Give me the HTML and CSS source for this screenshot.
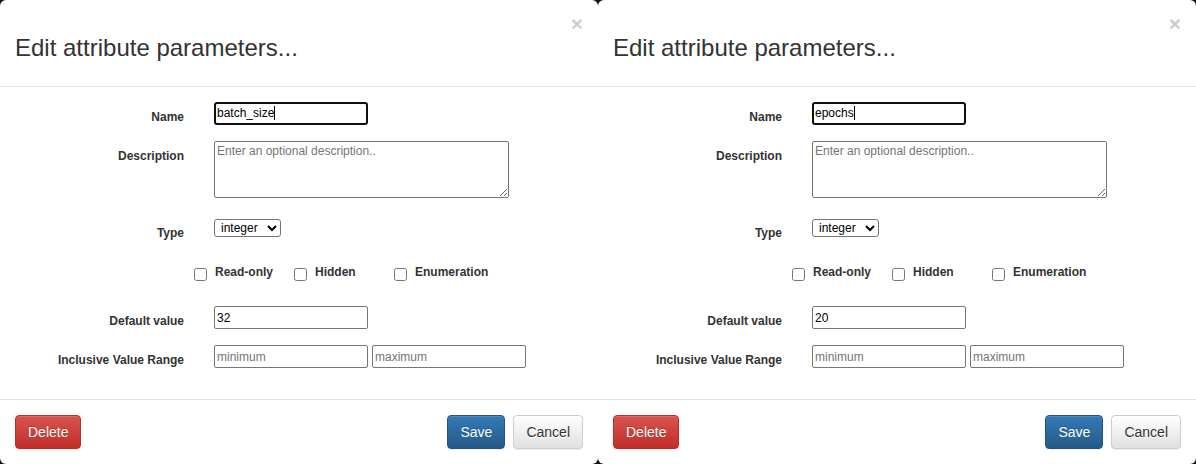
FILE: index.html
```html
<!DOCTYPE html>
<html>
<head>
<meta charset="utf-8">
<link rel="stylesheet" href="styles.css">
</head>
<body>
<div class="stage">
  <div class="modal">
    <div class="modal-header">
      <div class="close-row"><span class="close">×</span></div>
      <h4 class="modal-title">Edit attribute parameters...</h4>
    </div>
    <div class="modal-body">
      <div class="row r-name">
        <label class="lbl">Name</label>
        <div class="input focused">batch_size<span class="caret"></span></div>
      </div>
      <div class="row r-desc">
        <label class="lbl">Description</label>
        <textarea class="textarea" placeholder="Enter an optional description.."></textarea>
      </div>
      <div class="row r-type">
        <label class="lbl">Type</label>
        <select class="select"><option>integer</option></select>
      </div>
      <div class="checks">
        <label class="check"><input type="checkbox"><span>Read-only</span></label>
        <label class="check"><input type="checkbox"><span>Hidden</span></label>
        <label class="check"><input type="checkbox"><span>Enumeration</span></label>
      </div>
      <div class="row r-default">
        <label class="lbl">Default value</label>
        <input class="input" type="text" value="32">
      </div>
      <div class="row r-range">
        <label class="lbl">Inclusive Value Range</label>
        <div class="pair">
          <input class="input" type="text" placeholder="minimum">
          <input class="input" type="text" placeholder="maximum">
        </div>
      </div>
    </div>
    <div class="modal-footer">
      <button class="btn btn-danger">Delete</button>
      <div class="actions">
        <button class="btn btn-primary">Save</button>
        <button class="btn btn-default">Cancel</button>
      </div>
    </div>
  </div>

  <div class="modal">
    <div class="modal-header">
      <div class="close-row"><span class="close">×</span></div>
      <h4 class="modal-title">Edit attribute parameters...</h4>
    </div>
    <div class="modal-body">
      <div class="row r-name">
        <label class="lbl">Name</label>
        <div class="input focused">epochs<span class="caret"></span></div>
      </div>
      <div class="row r-desc">
        <label class="lbl">Description</label>
        <textarea class="textarea" placeholder="Enter an optional description.."></textarea>
      </div>
      <div class="row r-type">
        <label class="lbl">Type</label>
        <select class="select"><option>integer</option></select>
      </div>
      <div class="checks">
        <label class="check"><input type="checkbox"><span>Read-only</span></label>
        <label class="check"><input type="checkbox"><span>Hidden</span></label>
        <label class="check"><input type="checkbox"><span>Enumeration</span></label>
      </div>
      <div class="row r-default">
        <label class="lbl">Default value</label>
        <input class="input" type="text" value="20">
      </div>
      <div class="row r-range">
        <label class="lbl">Inclusive Value Range</label>
        <div class="pair">
          <input class="input" type="text" placeholder="minimum">
          <input class="input" type="text" placeholder="maximum">
        </div>
      </div>
    </div>
    <div class="modal-footer">
      <button class="btn btn-danger">Delete</button>
      <div class="actions">
        <button class="btn btn-primary">Save</button>
        <button class="btn btn-default">Cancel</button>
      </div>
    </div>
  </div>
</div>
</body>
</html>
```

FILE: styles.css
```css
* { box-sizing: border-box; }

html, body {
  margin: 0;
  padding: 0;
  background: #0d1414;
  font-family: "Liberation Sans", Arial, sans-serif;
  color: #333;
}

.stage {
  display: flex;
  width: 1196px;
  height: 464px;
}

.modal {
  width: 598px;
  height: 464px;
  background: #fff;
  border-radius: 6px;
  display: flex;
  flex-direction: column;
  overflow: hidden;
}

.modal-header {
  padding: 15px 15px 25px 15px;
  border-bottom: 1px solid #e5e5e5;
}

.close-row {
  height: 20px;
  display: flex;
  justify-content: flex-end;
}

.close {
  font-size: 21px;
  font-weight: bold;
  line-height: 18px;
  color: #000;
  opacity: 0.2;
}

.modal-title {
  margin: 0;
  font-size: 24px;
  font-weight: normal;
  line-height: 26px;
  color: #333;
}

.modal-body {
  padding: 15px 15px 30px 15px;
  flex: 1;
}

.row {
  display: flex;
  align-items: flex-start;
}

.lbl {
  width: 169px;
  margin-right: 30px;
  text-align: right;
  font-size: 12px;
  font-weight: bold;
  line-height: 17px;
  padding-top: 7px;
  color: #333;
  flex: none;
}

.r-desc { margin-top: 15px; }
.r-type { margin-top: 18px; }
.r-type .lbl { padding-top: 9px; }
.r-default { margin-top: 25px; }
.r-range { margin-top: 15px; }

.input {
  display: block;
  width: 154px;
  height: 23px;
  margin: 0;
  padding: 0 2px;
  border: 1px solid #767676;
  border-radius: 2px;
  font-family: "Liberation Sans", Arial, sans-serif;
  font-size: 12px;
  line-height: 21px;
  color: #000;
  background: #fff;
  outline: none;
}

.input::placeholder,
.textarea::placeholder {
  color: #757575;
}

.input.focused {
  border: 2px solid #101010;
  border-radius: 3px;
  padding: 0 1px;
  line-height: 19px;
}

.caret {
  display: inline-block;
  width: 1px;
  height: 14px;
  background: #000;
  vertical-align: -3px;
}

.textarea {
  display: block;
  width: 295px;
  height: 57px;
  margin: 0;
  padding: 2px;
  border: 1px solid #767676;
  border-radius: 2px;
  font-family: "Liberation Sans", Arial, sans-serif;
  font-size: 12px;
  color: #000;
  resize: both;
}

.select {
  display: block;
  width: 67px;
  height: 18px;
  margin: 3px 0 0 0;
  padding: 0 0 0 2px;
  font-family: "Liberation Sans", Arial, sans-serif;
  font-size: 12px;
  color: #000;
  border: 1px solid #767676;
  border-radius: 3px;
  background: #fff;
}

.checks {
  display: flex;
  margin-top: 22px;
  margin-left: 179px;
  height: 17px;
}

.check {
  width: 100px;
  display: flex;
  align-items: flex-start;
  font-size: 12px;
  font-weight: bold;
  line-height: 17px;
  color: #333;
}

.check input {
  width: 13px;
  height: 13px;
  margin: 4px 8px 0 0;
  flex: none;
}

.pair {
  display: flex;
  gap: 4px;
}

.modal-footer {
  border-top: 1px solid #e5e5e5;
  padding: 15px;
  display: flex;
  justify-content: space-between;
  align-items: center;
}

.actions {
  display: flex;
  gap: 8px;
}

.btn {
  height: 34px;
  padding: 6px 12px;
  font-family: "Liberation Sans", Arial, sans-serif;
  font-size: 14px;
  line-height: 20px;
  border-radius: 4px;
  border: 1px solid transparent;
  cursor: pointer;
}

.btn-danger {
  color: #fff;
  background: linear-gradient(to bottom, #d9534f 0%, #c12e2a 100%);
  border-color: #b92c28;
  text-shadow: 0 -1px 0 rgba(0,0,0,0.2);
  box-shadow: inset 0 1px 0 rgba(255,255,255,0.15), 0 1px 1px rgba(0,0,0,0.075);
}

.btn-primary {
  color: #fff;
  background: linear-gradient(to bottom, #337ab7 0%, #265a88 100%);
  border-color: #245580;
  text-shadow: 0 -1px 0 rgba(0,0,0,0.2);
  box-shadow: inset 0 1px 0 rgba(255,255,255,0.15), 0 1px 1px rgba(0,0,0,0.075);
}

.btn-default {
  color: #333;
  background: linear-gradient(to bottom, #fff 0%, #e0e0e0 100%);
  border-color: #ccc;
  text-shadow: 0 1px 0 #fff;
  box-shadow: inset 0 1px 0 rgba(255,255,255,0.15), 0 1px 1px rgba(0,0,0,0.075);
}
```
